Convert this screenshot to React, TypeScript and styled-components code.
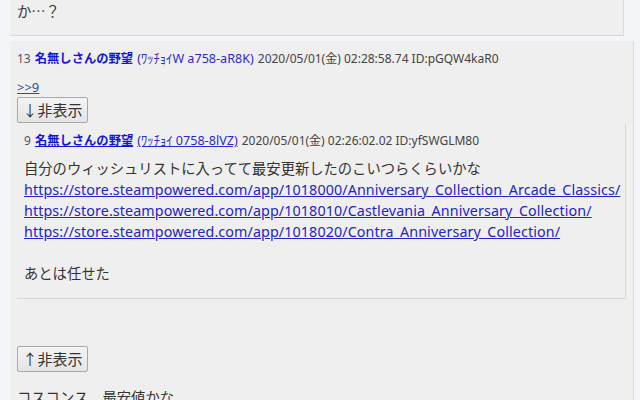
import React from "react";
import styled, { createGlobalStyle } from "styled-components";

const Global = createGlobalStyle`
  html, body { margin: 0; padding: 0; background: #f4f5f8; }
  body { font-family: "Noto Sans", "Noto Sans CJK JP", sans-serif; color: #333; overflow: hidden; }
`;

const Page = styled.div`
  width: 640px;
  height: 400px;
  overflow: hidden;
  padding-left: 10px;
  box-sizing: border-box;
`;

const Post = styled.div<{ $right: number; $padTop: number }>`
  background: #efefef;
  border-right: 1px solid #dadada;
  border-bottom: 1px solid #dadada;
  margin-right: ${(p) => p.$right}px;
  margin-bottom: 5px;
  padding: ${(p) => p.$padTop}px 7px 0 7px;
`;

const Quote = styled.div`
  background: #efefef;
  border-right: 1px solid #d8d8d8;
  border-bottom: 1px solid #d8d8d8;
  padding: 8px 7px 15px 7px;
`;

const Header = styled.div`
  font-size: 12px;
  line-height: 20px;
  height: 20px;
  white-space: nowrap;
  color: #444;
  display: flex;
  align-items: baseline;
  gap: 4px;
`;

const Num = styled.span`
  color: #555;
  font-size: 12px;
`;

const Name = styled.a<{ $u?: boolean }>`
  color: #1515d6;
  font-weight: bold;
  font-size: 12.3px;
  text-decoration: ${(p) => (p.$u ? "underline" : "none")};
`;

const Trip = styled.a<{ $u?: boolean }>`
  color: #2a2ad0;
  font-size: 12.6px;
  text-decoration: ${(p) => (p.$u ? "underline" : "none")};
`;

const Meta = styled.span`
  color: #444;
  font-size: 12px;
`;

const Body = styled.div<{ $top: number; $bottom?: number }>`
  font-family: "Noto Sans CJK JP", sans-serif;
  font-size: 14.3px;
  margin-top: ${(p) => p.$top}px;
  padding-bottom: ${(p) => p.$bottom ?? 0}px;
  white-space: nowrap;
`;

const Line = styled.div`
  height: 21px;
  line-height: 21px;
`;

const Anchor = styled.a`
  display: block;
  width: fit-content;
  color: #2f4f8f;
  font-size: 13px;
  line-height: 20px;
  text-decoration: underline;
`;

const Url = styled.a`
  font-family: "Noto Sans", sans-serif;
  color: #2323c8;
  text-decoration: underline;
  letter-spacing: 0.1px;
`;

const ToggleButton = styled.button`
  display: block;
  box-sizing: border-box;
  width: 71px;
  height: 26px;
  padding: 0 0 1px 0;
  font-family: "Noto Sans CJK JP", sans-serif;
  font-size: 15px;
  color: #333;
  background: linear-gradient(#f4f4f4, #e4e4e4);
  border: 1px solid #a9a9a9;
  border-radius: 2px;
`;

const Spacer = styled.div<{ $h: number }>`
  height: ${(p) => p.$h}px;
`;

const urls = [
  "https://store.steampowered.com/app/1018000/Anniversary_Collection_Arcade_Classics/",
  "https://store.steampowered.com/app/1018010/Castlevania_Anniversary_Collection/",
  "https://store.steampowered.com/app/1018020/Contra_Anniversary_Collection/",
];

export default function App() {
  return (
    <Page>
      <Global />
      <Post $right={16} $padTop={0}>
        <Body $top={0} $bottom={14}>
          <Line>か…？</Line>
        </Body>
      </Post>
      <Post $right={6} $padTop={8}>
        <Header>
          <Num>13</Num>
          <Name>名無しさんの野望</Name>
          <Trip>(ﾜｯﾁｮｲW a758-aR8K)</Trip>
          <Meta>2020/05/01(金) 02:28:58.74 ID:pGQW4kaR0</Meta>
        </Header>
        <Spacer $h={8} />
        <Anchor>&gt;&gt;9</Anchor>
        <ToggleButton>↓非表示</ToggleButton>
        <Quote>
          <Header>
            <Num>9</Num>
            <Name $u>名無しさんの野望</Name>
            <Trip $u>(ﾜｯﾁｮｲ 0758-8lVZ)</Trip>
            <Meta>2020/05/01(金) 02:26:02.02 ID:yfSWGLM80</Meta>
          </Header>
          <Body $top={6}>
            <Line>自分のウィッシュリストに入ってて最安更新したのこいつらくらいかな</Line>
            {urls.map((u) => (
              <Line key={u}>
                <Url>{u}</Url>
              </Line>
            ))}
            <Line />
            <Line>あとは任せた</Line>
          </Body>
        </Quote>
        <Spacer $h={47} />
        <ToggleButton>↑非表示</ToggleButton>
        <Body $top={14}>
          <Line>コスコンス、最安値かな</Line>
        </Body>
      </Post>
    </Page>
  );
}
